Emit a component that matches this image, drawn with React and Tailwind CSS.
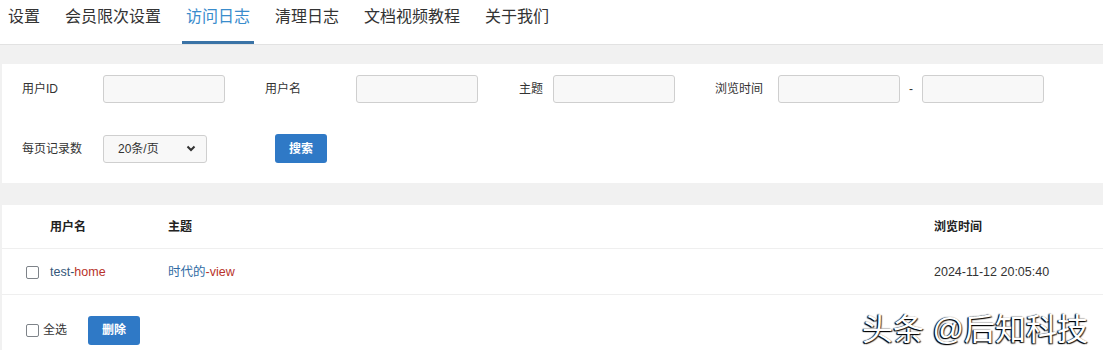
import React from "react";

const font = { fontFamily: '"Liberation Sans", "Noto Sans CJK SC", sans-serif' };

function Box() {
  return <span className="inline-block w-[13px] h-[13px] border border-[#7e8389] rounded-[2px] bg-white" />;
}

function Field({ w = "w-[122px]" }) {
  return <div className={`${w} h-[28px] border border-[#cfcfcf] rounded-[3px] bg-[#f8f8f8]`} />;
}

const tabs = ["设置", "会员限次设置", "访问日志", "清理日志", "文档视频教程", "关于我们"];

export default function App() {
  return (
    <div className="relative w-[1103px] h-[350px] overflow-hidden bg-[#f1f1f1] text-[#333]" style={font}>
      <nav className="h-[45px] bg-white border-b border-[#e2e2e2] flex items-stretch pl-[4px] gap-[17px]">
        {tabs.map((t) => (
          <div
            key={t}
            className={
              "px-[4px] flex items-center text-[16px] pb-[7px] border-b-[3px] " +
              (t === "访问日志" ? "text-[#3a8ccc] border-[#3a73a6]" : "text-[#333] border-transparent")
            }
          >
            {t}
          </div>
        ))}
      </nav>

      <div className="h-[19px]" />

      <section className="ml-[2px] bg-white h-[119px] pt-[11px] pl-[20px] text-[12px]">
        <div className="flex items-center h-[28px]">
          <span className="w-[81px]">用户ID</span>
          <Field />
          <span className="ml-[40px] w-[91px]">用户名</span>
          <Field />
          <span className="ml-[41px] w-[34px]">主题</span>
          <Field />
          <span className="ml-[40px] w-[63px]">浏览时间</span>
          <Field />
          <span className="w-[22px] text-center">-</span>
          <Field />
        </div>
        <div className="flex items-center h-[29px] mt-[31px]">
          <span className="w-[81px]">每页记录数</span>
          <div className="w-[104px] h-[28px] border border-[#cfcfcf] rounded-[3px] bg-[#f8f8f8] flex items-center justify-between pl-[14px] pr-[10px] text-[12px]">
            <span>20条/页</span>
            <svg width="10" height="7" viewBox="0 0 10 7">
              <path d="M1.5 1.5 L5 5 L8.5 1.5" fill="none" stroke="#333" strokeWidth="2" />
            </svg>
          </div>
          <button className="ml-[68px] w-[52px] h-[29px] rounded-[3px] bg-[#2f79c6] text-white font-bold text-[12px]">
            搜索
          </button>
        </div>
      </section>

      <div className="h-[22px]" />

      <section className="ml-[2px] bg-white h-[145px] text-[12px]">
        <div className="flex items-center h-[44px] border-b border-[#efefef] font-bold text-[#222]">
          <span className="ml-[48px] w-[118px]">用户名</span>
          <span className="flex-1">主题</span>
          <span className="w-[169px]">浏览时间</span>
        </div>
        <div className="flex items-center h-[46px] border-b border-[#efefef] pt-[2px]">
          <span className="ml-[24px] w-[24px] flex"><Box /></span>
          <span className="w-[118px] text-[12.5px]">
            <span className="text-[#34577a]">test-</span>
            <span className="text-[#b8322a]">home</span>
          </span>
          <span className="flex-1 text-[12.5px]">
            <span className="text-[#2f6aa3]">时代的</span>
            <span className="text-[#b8322a]">-view</span>
          </span>
          <span className="w-[169px] text-[12.5px] text-[#333]">2024-11-12 20:05:40</span>
        </div>
        <div className="flex items-center h-[53px] pt-[17px]">
          <span className="ml-[24px] flex items-center gap-[4px]">
            <Box />
            <span>全选</span>
          </span>
          <button className="ml-[21px] w-[52px] h-[29px] rounded-[3px] bg-[#2f79c6] text-white font-bold text-[12px]">
            删除
          </button>
        </div>
      </section>

      <div
        className="absolute left-[862px] top-[314px] text-[31px] text-white leading-none"
        style={{ textShadow: "-1px 1px 1px #000, 1px 1px 1px #333, -1px 0 1px #222" }}
      >
        头条 @后知科技
      </div>
    </div>
  );
}
